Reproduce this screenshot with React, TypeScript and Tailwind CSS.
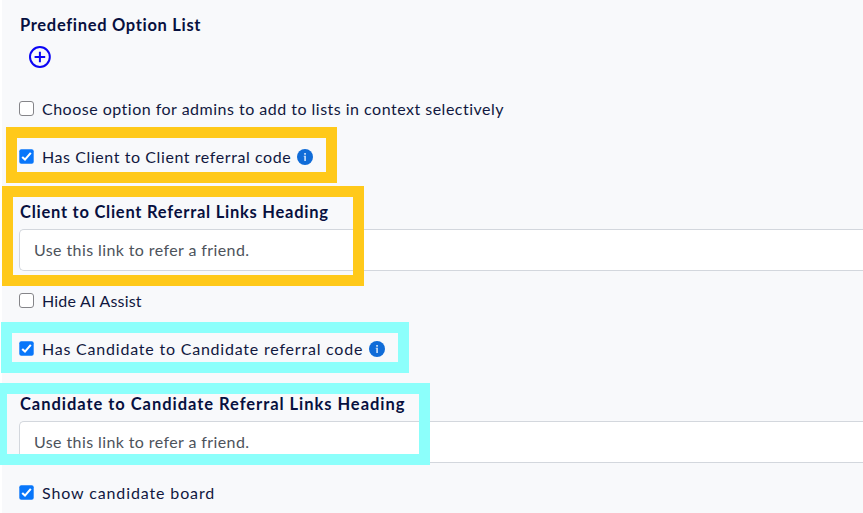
import React from 'react';

function Tick({ label, checked, info, spacing }: { label: string; checked?: boolean; info?: boolean; spacing: string }) {
  return (
    <label className="flex h-6 items-center">
      {checked ? (
        <svg className="mr-2 -mt-0.5 h-[15px] w-[15px] shrink-0" viewBox="0 0 15 15">
          <rect x="0.3" y="0.3" width="14.4" height="14.4" rx="2" fill="#0876fa" />
          <path d="M3.2 7.9 6 10.6 11.8 3.9" fill="none" stroke="#fff" strokeWidth="2.1" />
        </svg>
      ) : (
        <span className="mr-2 -mt-0.5 h-[15px] w-[15px] shrink-0 rounded-[3px] border border-[#858589] bg-white" />
      )}
      <span className={`whitespace-nowrap ${spacing}`}>{label}</span>
      {info && (
        <svg className="ml-1.5 h-4 w-4 shrink-0" viewBox="0 0 16 16">
          <circle cx="8" cy="8" r="8" fill="#106cd8" />
          <path d="M7.1 4h1.9v1.7H7.1zM6.8 6.7H9V12H7.2V8h-.4z" fill="#b9d5f6" />
        </svg>
      )}
    </label>
  );
}

function Heading({ text, spacing }: { text: string; spacing: string }) {
  return (
    <div className={`h-6 whitespace-nowrap pt-px pl-px text-[16.5px] leading-6 font-bold text-[#07103f] ${spacing}`}>
      {text}
    </div>
  );
}

function Field({ heading, spacing }: { heading: string; spacing: string }) {
  return (
    <div>
      <Heading text={heading} spacing={spacing} />
      <div className="mt-1.5 h-[42px] rounded-l-[5px] border border-r-0 border-[#d3d7dd] bg-white pt-2 pl-3.5 text-[#4d535b]">
        <span className="tracking-[0.4px]">Use this link to refer a friend.</span>
      </div>
    </div>
  );
}

export default function App() {
  return (
    <div className="relative h-[513px] w-[863px] overflow-hidden bg-white pl-0.5 font-['Lato',sans-serif] text-base text-[#11183f]">
      <div className="flex h-full flex-col bg-[#f8f9fb] pt-3 pl-[17px]">
        <Heading text="Predefined Option List" spacing="tracking-[0.68px]" />
        <svg className="mt-[9px] ml-[9px] h-6 w-6" viewBox="0 0 24 24" fill="none" stroke="#0b05f5" strokeWidth="2">
          <circle cx="11.9" cy="12" r="9.9" />
          <path d="M11.9 6.7v10.6M6.6 12h10.6" />
        </svg>
        <div className="mt-7">
          <Tick label="Choose option for admins to add to lists in context selectively" spacing="tracking-[0.49px]" />
        </div>
        <div className="mt-6">
          <Tick label="Has Client to Client referral code" checked info spacing="tracking-[0.58px]" />
        </div>
        <div className="mt-[30px]">
          <Field heading="Client to Client Referral Links Heading" spacing="tracking-[0.75px]" />
        </div>
        <div className="mt-[18px]">
          <Tick label="Hide AI Assist" spacing="tracking-[0.2px]" />
        </div>
        <div className="mt-6">
          <Tick label="Has Candidate to Candidate referral code" checked info spacing="tracking-[0.79px]" />
        </div>
        <div className="mt-[30px]">
          <Field heading="Candidate to Candidate Referral Links Heading" spacing="tracking-[0.96px]" />
        </div>
        <div className="mt-[18px]">
          <Tick label="Show candidate board" checked spacing="tracking-[0.88px]" />
        </div>
      </div>
      <div className="absolute top-[127px] left-[6px] h-14 w-[331px] border-11 border-[#ffc91a]" />
      <div className="absolute top-[186px] left-[2px] h-[100px] w-[362px] border-11 border-[#ffc91a]" />
      <div className="absolute top-[322px] left-[1px] h-[51px] w-[408px] border-11 border-[#8cfffb]" />
      <div className="absolute top-[383px] -left-1 h-[82px] w-[434px] border-11 border-[#8cfffb]" />
    </div>
  );
}
